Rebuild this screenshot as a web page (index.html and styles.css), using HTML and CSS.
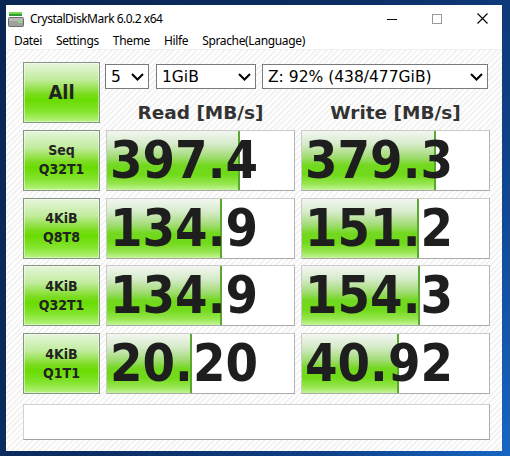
FILE: index.html
```html
<!DOCTYPE html>
<html>
<head>
<meta charset="utf-8">
<link rel="stylesheet" href="styles.css">
</head>
<body>
<div class="window">
  <div class="titlebar">
    <svg class="app-icon" width="16" height="16" viewBox="0 0 16 16">
      <rect x="1" y="1" width="13" height="2" fill="#78d650"/>
      <rect x="1" y="3" width="13" height="2" fill="#2f9a35"/>
      <rect x="0" y="6" width="16" height="10" rx="2" fill="#6c6c6c"/>
      <rect x="1" y="7" width="14" height="8" rx="1" fill="#a0a0a0"/>
      <rect x="1" y="7" width="14" height="3" fill="#b8b8b8"/>
      <rect x="10" y="10" width="4" height="2" fill="#86e07a"/>
    </svg>
    <span class="title">CrystalDiskMark 6.0.2 x64</span>
    <div class="controls">
      <svg width="10" height="10" viewBox="0 0 10 10"><line x1="0" y1="5.5" x2="10" y2="5.5" stroke="#000" stroke-width="1"/></svg>
      <svg width="10" height="10" viewBox="0 0 10 10"><rect x="0.5" y="0.5" width="9" height="9" fill="none" stroke="#999" stroke-width="1"/></svg>
      <svg width="11" height="11" viewBox="0 0 11 11"><path d="M0.5 0.5 L10.5 10.5 M10.5 0.5 L0.5 10.5" stroke="#000" stroke-width="1.1" fill="none"/></svg>
    </div>
  </div>
  <div class="menubar">
    <span class="menu-item">Datei</span>
    <span class="menu-item">Settings</span>
    <span class="menu-item">Theme</span>
    <span class="menu-item">Hilfe</span>
    <span class="menu-item">Sprache(Language)</span>
  </div>
  <div class="client">
    <div class="grid">
      <div class="btn btn-all">All</div>
      <div class="top-area">
        <div class="selects">
          <div class="select sel-count"><span>5</span><svg class="chev" width="13" height="8" viewBox="0 0 13 8"><polyline points="1,1 6.5,6.5 12,1" fill="none" stroke="#000" stroke-width="2"/></svg></div>
          <div class="select sel-size"><span>1GiB</span><svg class="chev" width="13" height="8" viewBox="0 0 13 8"><polyline points="1,1 6.5,6.5 12,1" fill="none" stroke="#000" stroke-width="2"/></svg></div>
          <div class="select sel-drive"><span>Z: 92% (438/477GiB)</span><svg class="chev" width="13" height="8" viewBox="0 0 13 8"><polyline points="1,1 6.5,6.5 12,1" fill="none" stroke="#000" stroke-width="2"/></svg></div>
        </div>
        <div class="headers">
          <div class="header">Read [MB/s]</div>
          <div class="header">Write [MB/s]</div>
        </div>
      </div>

      <div class="btn">Seq<br>Q32T1</div>
      <div class="value"><div class="fill" style="width:133px"></div><span class="num">397.4</span></div>
      <div class="value"><div class="fill" style="width:134px"></div><span class="num">379.3</span></div>

      <div class="btn">4KiB<br>Q8T8</div>
      <div class="value"><div class="fill" style="width:115px"></div><span class="num">134.9</span></div>
      <div class="value"><div class="fill" style="width:117px"></div><span class="num">151.2</span></div>

      <div class="btn">4KiB<br>Q32T1</div>
      <div class="value"><div class="fill" style="width:115px"></div><span class="num">134.9</span></div>
      <div class="value"><div class="fill" style="width:118px"></div><span class="num">154.3</span></div>

      <div class="btn">4KiB<br>Q1T1</div>
      <div class="value"><div class="fill" style="width:85px"></div><span class="num">20.20</span></div>
      <div class="value"><div class="fill" style="width:97px"></div><span class="num">40.92</span></div>
    </div>
    <div class="status"></div>
  </div>
</div>
</body>
</html>
```

FILE: styles.css
```css
* { box-sizing: border-box; }

body {
  margin: 0;
  width: 510px;
  height: 456px;
  overflow: hidden;
  padding: 5px 8px 5px 6px;
  background: linear-gradient(120deg, #0a2552 0%, #0c2d62 45%, #0f3f86 75%, #1766c4 100%);
}

.window {
  width: 496px;
  height: 446px;
  background: #fff;
  display: flex;
  flex-direction: column;
}

.titlebar {
  height: 25px;
  display: flex;
  align-items: center;
  font: 12px "Noto Sans", "DejaVu Sans", sans-serif;
  color: #000;
}

.app-icon {
  margin-left: 2px;
  margin-top: 3px;
  flex: none;
}

.title {
  margin-left: 6px;
  margin-top: 1px;
  letter-spacing: -0.5px;
}

.controls {
  margin-left: auto;
  display: flex;
  align-items: center;
  gap: 35px;
  padding-right: 14px;
  margin-top: 2px;
}

.menubar {
  height: 19px;
  display: flex;
  align-items: center;
  padding-left: 1px;
  padding-top: 2px;
  font: 12px "Noto Sans", "DejaVu Sans", sans-serif;
  letter-spacing: -0.35px;
  color: #000;
}

.menu-item {
  padding: 0 7px;
}

.client {
  flex: 1;
  border-top: 1px solid #efefef;
  padding: 12px 0 0 17px;
  background: repeating-linear-gradient(135deg, #ffffff 0 2px, #f3f3f3 2px 4px);
}

.grid {
  display: grid;
  grid-template-columns: 77px 189px 189px;
  grid-template-rows: repeat(5, 61px);
  column-gap: 6px;
  row-gap: 6.75px;
}

.btn {
  border: 1px solid #84947f;
  background: linear-gradient(#e6f5dc 0%, #c2ec9e 28%, #7ddc22 52%, #68dc00 62%, #84e42e 82%, #b6f380 100%);
  box-shadow: inset 0 0 0 1px rgba(255, 255, 255, 0.45);
  display: flex;
  align-items: center;
  justify-content: center;
  text-align: center;
  font: bold 14px/19px "DejaVu Sans Condensed", "DejaVu Sans", sans-serif;
  font-stretch: condensed;
  color: #222;
}

.btn-all {
  font-size: 20px;
}

.top-area {
  grid-column: 2 / 4;
  display: flex;
  flex-direction: column;
}

.selects {
  display: flex;
  height: 25px;
  margin: 2px 0 0 -1px;
}

.select {
  height: 25px;
  border: 1px solid #7a7a7a;
  background: #fff;
  display: flex;
  align-items: center;
  justify-content: space-between;
  padding: 0 4px 0 5px;
  font: 15.5px "DejaVu Sans", sans-serif;
  color: #000;
}

.chev { flex: none; }

.sel-count { width: 44px; }
.sel-size { width: 100px; margin-left: 7px; }
.sel-drive { width: 226px; margin-left: 6px; }

.headers {
  display: grid;
  grid-template-columns: 189px 189px;
  column-gap: 6px;
  margin-top: 13px;
}

.header {
  text-align: center;
  font: bold 18.5px/22px "DejaVu Sans", sans-serif;
  color: #333;
}

.value {
  position: relative;
  overflow: hidden;
  background: #fff;
  border: 1px solid #cbcbcb;
  border-right-color: #b4b4b4;
  border-bottom-color: #aaaaaa;
}

.fill {
  position: absolute;
  left: 0;
  top: 0;
  bottom: 0;
  border-right: 2px solid #5aa832;
  background: linear-gradient(#f3f6f1 0%, #d6ebca 22%, #a2dc74 44%, #72d820 58%, #70da18 74%, #98e650 90%, #c4f59a 100%);
}

.num {
  position: relative;
  display: block;
  padding-left: 3px;
  font: bold 52px/59px "DejaVu Sans Condensed", "DejaVu Sans", sans-serif;
  font-stretch: condensed;
  color: #1e1e1e;
  white-space: nowrap;
}

.status {
  margin-top: 10px;
  width: 467px;
  height: 36px;
  background: #fff;
  border: 1px solid #d2d2d2;
  border-right-color: #ababab;
  border-bottom-color: #a0a0a0;
}
```
